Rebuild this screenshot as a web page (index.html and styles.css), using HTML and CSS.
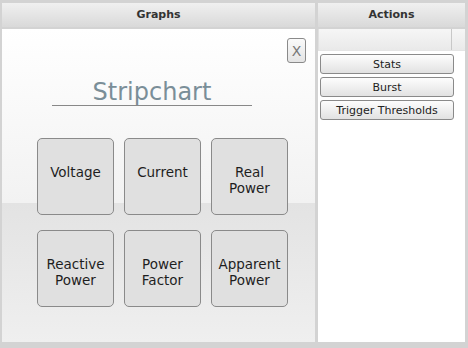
FILE: index.html
```html
<!DOCTYPE html>
<html lang="en">
<head>
    <meta charset="UTF-8">
    <meta name="viewport" content="width=device-width, initial-scale=1.0">
    <title>Graphs</title>
    <link rel="stylesheet" href="styles.css">
</head>
<body>
    <div class="frame">
        <div class="panel graphs">
            <div class="panel-header">Graphs</div>
            <div class="graphs-body">
                <div class="close-row">
                    <button class="close-btn">X</button>
                </div>
                <div class="chart-title">Stripchart</div>
                <div class="graph-grid">
                    <button class="graph-btn"><span>Voltage</span></button>
                    <button class="graph-btn"><span>Current</span></button>
                    <button class="graph-btn"><span>Real</span><span>Power</span></button>
                    <button class="graph-btn"><span>Reactive</span><span>Power</span></button>
                    <button class="graph-btn"><span>Power</span><span>Factor</span></button>
                    <button class="graph-btn"><span>Apparent</span><span>Power</span></button>
                </div>
            </div>
        </div>
        <div class="panel actions">
            <div class="panel-header">Actions</div>
            <div class="actions-body">
                <div class="col-header">
                    <div class="col-main"></div>
                    <div class="col-rest"></div>
                </div>
                <div class="action-list">
                    <button class="action-btn">Stats</button>
                    <button class="action-btn">Burst</button>
                    <button class="action-btn">Trigger Thresholds</button>
                </div>
            </div>
        </div>
    </div>
</body>
</html>
```

FILE: styles.css
```css
/* Layout general */
html, body {
    margin: 0;
    height: 100%;
}
body {
    background-color: #d3d3d3;
    font-family: "DejaVu Sans", sans-serif;
    color: #222;
}
.frame {
    display: flex;
    gap: 3px;
    height: 348px;
    box-sizing: border-box;
    padding: 3px 3px 6px 2px;
}
.panel {
    display: flex;
    flex-direction: column;
}
.graphs {
    width: 313px;
}
.actions {
    width: 147px;
}
.panel-header {
    height: 24px;
    line-height: 24px;
    text-align: center;
    font-size: 11px;
    font-weight: bold;
    color: #333;
    background: linear-gradient(#f0f0f0, #d9d9d9);
    border-bottom: 2px solid #d3d3d3;
}

/* Panel de graficas */
.graphs-body {
    flex: 1;
    background: linear-gradient(#ffffff 0, #f2f2f2 174px, #e3e3e3 174px, #efefef 100%);
}
.close-row {
    display: flex;
    justify-content: flex-end;
    padding: 9px 9px 0 0;
}
.close-btn {
    width: 19px;
    height: 25px;
    padding: 0;
    border: 1px solid #8a8a8a;
    border-radius: 3px;
    background: linear-gradient(#fafafa, #e4e4e4);
    color: #777;
    font-family: "DejaVu Sans", sans-serif;
    font-size: 14px;
}
.chart-title {
    width: 200px;
    margin: 16px 0 0 50px;
    border-bottom: 1px solid #888;
    text-align: center;
    font-size: 24px;
    line-height: 26px;
    color: #7a8e98;
}
.graph-grid {
    display: grid;
    grid-template-columns: repeat(3, 77px);
    grid-auto-rows: 77px;
    column-gap: 10px;
    row-gap: 15px;
    margin: 32px 0 0 35px;
}
.graph-btn {
    display: flex;
    flex-direction: column;
    justify-content: flex-start;
    align-items: center;
    padding: 25px 0 0;
    border: 1px solid #8a8a8a;
    border-radius: 5px;
    background-color: #e0e0e0;
    color: #1e1e1e;
    font-family: "DejaVu Sans", sans-serif;
    font-size: 13.5px;
    line-height: 16px;
}

/* Panel de acciones */
.actions-body {
    flex: 1;
    background-color: #fff;
}
.col-header {
    display: flex;
    height: 21px;
    background: linear-gradient(#f6f6f6, #e9e9e9);
    border-left: 1px solid #e0e0e0;
    border-bottom: 1px solid #e4e4e4;
}
.col-main {
    width: 132px;
    border-right: 1px solid #c8c8c8;
}
.col-rest {
    flex: 1;
}
.action-list {
    display: flex;
    flex-direction: column;
    gap: 3px;
    padding: 3px 0 0 2px;
}
.action-btn {
    width: 134px;
    height: 20px;
    padding: 0;
    border: 1px solid #8a8a8a;
    border-radius: 3px;
    background: linear-gradient(#fdfdfd, #e2e2e2);
    color: #222;
    font-family: "DejaVu Sans", sans-serif;
    font-size: 11px;
}
```
